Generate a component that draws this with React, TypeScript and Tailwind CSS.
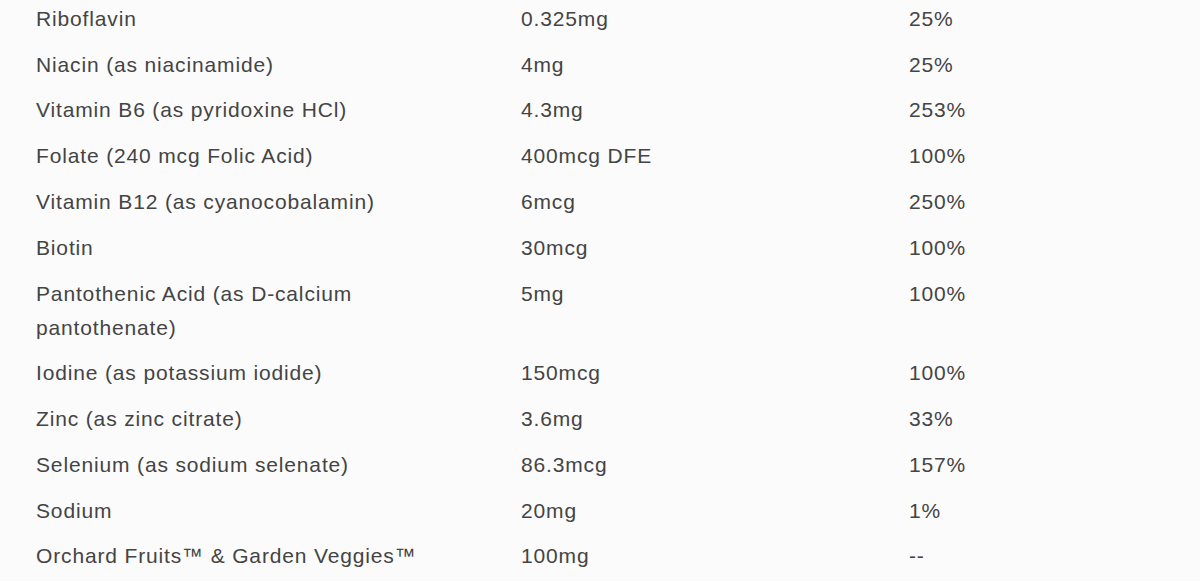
import React from "react";

const rows: [string, string, string][] = [
  ["Riboflavin", "0.325mg", "25%"],
  ["Niacin (as niacinamide)", "4mg", "25%"],
  ["Vitamin B6 (as pyridoxine HCl)", "4.3mg", "253%"],
  ["Folate (240 mcg Folic Acid)", "400mcg DFE", "100%"],
  ["Vitamin B12 (as cyanocobalamin)", "6mcg", "250%"],
  ["Biotin", "30mcg", "100%"],
  ["Pantothenic Acid (as D-calcium pantothenate)", "5mg", "100%"],
  ["Iodine (as potassium iodide)", "150mcg", "100%"],
  ["Zinc (as zinc citrate)", "3.6mg", "33%"],
  ["Selenium (as sodium selenate)", "86.3mcg", "157%"],
  ["Sodium", "20mg", "1%"],
  ["Orchard Fruits™ & Garden Veggies™", "100mg", "--"],
];

const App = () => (
  <div
    className="w-[1200px] h-[581px] overflow-hidden bg-[#fbfbfb] text-[#444444] text-[21px] leading-[34px] tracking-[0.85px]"
    style={{ fontFamily: '"Liberation Sans", Arial, sans-serif' }}
  >
    <div className="-mt-[4px] pl-[36px]">
      {rows.map(([name, amount, dv], index) => (
        <div key={index} className="grid grid-cols-[485px_388px_1fr] py-[5.9px]">
          <div className="pr-[60px]">{name}</div>
          <div>{amount}</div>
          <div>{dv}</div>
        </div>
      ))}
    </div>
  </div>
);

export default App;
